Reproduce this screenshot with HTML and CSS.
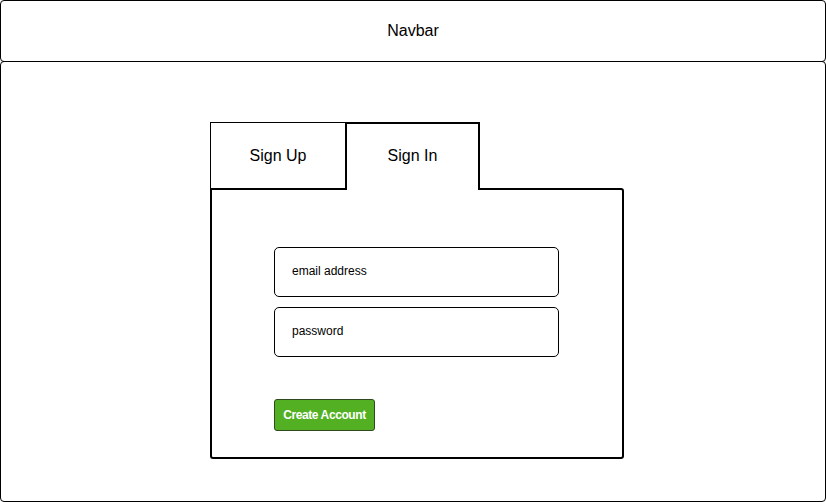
FILE: index.html
```html
<!DOCTYPE html>
<html>
<head>
<meta charset="utf-8">
<link rel="stylesheet" href="styles.css">
</head>
<body>
  <header class="navbar">Navbar</header>
  <main class="main">
    <div class="auth">
      <div class="tabs">
        <div class="tab tab-up">Sign Up</div>
        <div class="tab tab-in">Sign In</div>
      </div>
      <div class="panel">
        <div class="field">email address</div>
        <div class="field">password</div>
        <button class="btn">Create Account</button>
      </div>
    </div>
  </main>
</body>
</html>
```
FILE: styles.css
```css
* { box-sizing: border-box; }
html, body { margin: 0; padding: 0; background: #fff; }
body {
  width: 826px;
  height: 502px;
  font-family: "Liberation Sans", Arial, Helvetica, sans-serif;
  color: #000;
}
.navbar {
  height: 62px;
  border: 1px solid #000;
  border-radius: 4px;
  display: flex;
  align-items: center;
  justify-content: center;
  font-size: 16px;
  padding-bottom: 1px;
}
.main {
  margin-top: -1px;
  height: 441px;
  border: 1px solid #000;
  border-radius: 4px;
  padding: 60px 0 0 209px;
}
.auth { width: 414px; }
.tabs { display: flex; height: 66px; }
.tab {
  display: flex;
  align-items: center;
  justify-content: center;
  font-size: 16px;
  background: #fff;
}
.tab-up {
  width: 136px;
  height: 66px;
  border: 1px solid #000;
  border-bottom: none;
}
.tab-in {
  width: 135px;
  height: 68px;
  margin-left: -1px;
  border: 2px solid #000;
  border-bottom: none;
  position: relative;
  z-index: 1;
  padding-bottom: 2px;
}
.panel {
  height: 271px;
  border: 2px solid #000;
  border-radius: 3px;
  border-top-left-radius: 0;
  padding: 57px 0 0 62px;
  display: flex;
  flex-direction: column;
  align-items: flex-start;
}
.field {
  width: 285px;
  height: 50px;
  border: 1px solid #000;
  border-radius: 5px;
  font-size: 12px;
  padding: 16px 0 0 17px;
  margin-bottom: 10px;
}
.btn {
  margin-top: 32px;
  width: 101px;
  height: 32px;
  background: #52b022;
  border: 1px solid #2f4a1f;
  border-radius: 3px;
  color: #fff;
  font-family: "Liberation Sans", Arial, Helvetica, sans-serif;
  font-weight: bold;
  font-size: 12px;
  padding: 0;
  letter-spacing: -0.4px;
}
```
